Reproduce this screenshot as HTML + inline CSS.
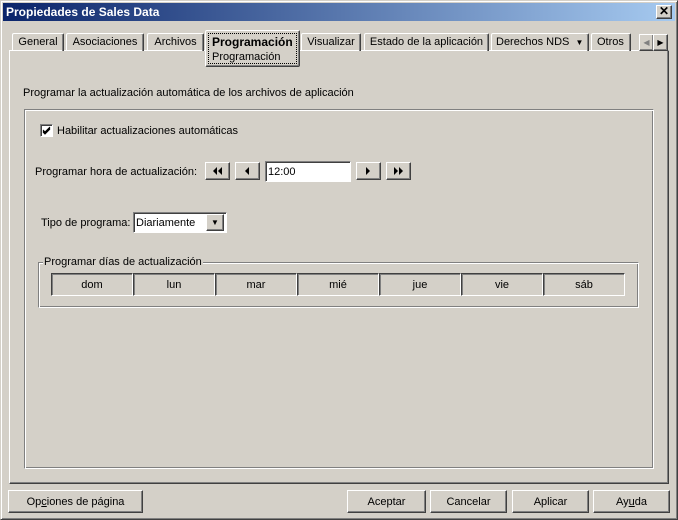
<!DOCTYPE html>
<html><head><meta charset="utf-8"><style>
*{margin:0;padding:0;box-sizing:border-box}
body{width:678px;height:520px;background:#d4d0c8;font-family:"Liberation Sans",sans-serif;font-size:11px;color:#000;position:relative;overflow:hidden}
.a{position:absolute}
.win{left:0;top:0;width:678px;height:520px;border:1px solid;border-color:#d4d0c8 #404040 #404040 #d4d0c8;box-shadow:inset 1px 1px #fff,inset -1px -1px #808080}
.title{left:3px;top:3px;width:672px;height:18px;background:linear-gradient(90deg,#0a246a,#a6caf0);color:#fff;font-weight:bold;font-size:12px;line-height:18px;padding-left:3px}
.xb{left:656px;top:5px;width:16px;height:14px;background:#d4d0c8;border:1px solid;border-color:#fff #404040 #404040 #fff;box-shadow:inset -1px -1px #808080;font-size:12px;line-height:11px;text-align:center;font-weight:bold;color:#000}
.tab{top:33px;height:18px;border:1px solid;border-bottom:none;border-color:#fff #404040 #404040 #fff;border-radius:2px 2px 0 0;box-shadow:inset -1px 0 #808080;line-height:17px;text-align:center;font-size:11px}
.panel{left:9px;top:50px;width:660px;height:434px;border:1px solid;border-color:#fff #404040 #404040 #fff;box-shadow:inset -1px -1px #808080}
.grp{left:24px;top:109px;width:630px;height:360px;border:1px solid;border-color:#808080 #fff #fff #808080;box-shadow:inset 1px 1px #fff,inset -1px -1px #808080}
.btn{border:1px solid;border-color:#fff #404040 #404040 #fff;box-shadow:inset -1px -1px #808080;text-align:center;background:#d4d0c8}
.sunk{border:1px solid;border-color:#808080 #fff #fff #808080;box-shadow:inset 1px 1px #404040;background:#fff}
.day{top:273px;height:23px;width:82px;border:1px solid;border-color:#404040 #fff #fff #404040;box-shadow:inset 1px 1px #808080;text-align:center;line-height:23px}
.ico{display:block;margin:4px auto 0}
</style></head><body>
<div class="a win"></div>
<div class="a title">Propiedades de Sales Data</div>
<div class="a xb">✕</div>

<div class="a panel"></div>
<div class="a tab" style="left:12px;width:52px">General</div>
<div class="a tab" style="left:66px;width:78px">Asociaciones</div>
<div class="a tab" style="left:147px;width:57px">Archivos</div>
<div class="a tab" style="left:301px;width:60px">Visualizar</div>
<div class="a tab" style="left:364px;width:125px">Estado de la aplicación</div>
<div class="a tab" style="left:491px;width:98px;text-align:left;padding-left:4px">Derechos NDS &nbsp;<span style="font-size:8px">▼</span></div>
<div class="a tab" style="left:591px;width:40px;text-align:left;padding-left:5px;overflow:hidden">Otros</div>
<div class="a" style="left:205px;top:30px;width:95px;height:37px;background:#d4d0c8;border:1px solid;border-color:#fff #404040 #404040 #fff;border-radius:2px;box-shadow:inset -1px -1px #808080"></div>
<div class="a" style="left:208px;top:33px;width:89px;height:31px;border:1px dotted #000"></div>
<div class="a" style="left:212px;top:35px;font-weight:bold;font-size:12px">Programación</div>
<div class="a" style="left:212px;top:51px">Programación</div>
<div class="a btn" style="left:639px;top:34px;width:15px;height:17px;font-size:8px;line-height:15px;color:#808080">◀</div>
<div class="a btn" style="left:653px;top:34px;width:15px;height:17px;font-size:8px;line-height:15px">▶</div>

<div class="a" style="left:23px;top:87px">Programar la actualización automática de los archivos de aplicación</div>
<div class="a grp"></div>

<div class="a sunk" style="left:40px;top:124px;width:13px;height:13px"><svg width="11" height="11" style="position:absolute;left:0;top:0"><path d="M2 5 L4 7 L9 2 M2 6 L4 8 L9 3 M2 7 L4 9 L9 4" stroke="#000" fill="none"/></svg></div>
<div class="a" style="left:57px;top:125px">Habilitar actualizaciones automáticas</div>

<div class="a" style="left:35px;top:166px">Programar hora de actualización:</div>
<div class="a btn" style="left:205px;top:162px;width:25px;height:18px"><svg class="ico" width="10" height="8"><path d="M4 0 L0 4 L4 8Z M9 0 L5 4 L9 8Z" fill="#000"/></svg></div>
<div class="a btn" style="left:235px;top:162px;width:25px;height:18px"><svg class="ico" width="5" height="8"><path d="M4 0 L0 4 L4 8Z" fill="#000"/></svg></div>
<div class="a sunk" style="left:265px;top:161px;width:86px;height:21px;line-height:20px;padding-left:2px">12:00</div>
<div class="a btn" style="left:356px;top:162px;width:25px;height:18px"><svg class="ico" width="5" height="8"><path d="M0 0 L4 4 L0 8Z" fill="#000"/></svg></div>
<div class="a btn" style="left:386px;top:162px;width:25px;height:18px"><svg class="ico" width="10" height="8"><path d="M0 0 L4 4 L0 8Z M5 0 L9 4 L5 8Z" fill="#000"/></svg></div>

<div class="a" style="left:41px;top:217px">Tipo de programa:</div>
<div class="a sunk" style="left:133px;top:212px;width:94px;height:21px;line-height:20px;padding-left:2px">Diariamente</div>
<div class="a btn" style="left:206px;top:214px;width:18px;height:17px;font-size:8px;line-height:15px">▼</div>

<div class="a" style="left:38px;top:262px;width:601px;height:46px;border:1px solid;border-color:#808080 #fff #fff #808080;box-shadow:inset 1px 1px #fff,inset -1px -1px #808080"></div>
<div class="a" style="left:43px;top:256px;background:#d4d0c8;padding:0 1px">Programar días de actualización</div>
<div class="a day" style="left:51px">dom</div>
<div class="a day" style="left:133px">lun</div>
<div class="a day" style="left:215px">mar</div>
<div class="a day" style="left:297px">mié</div>
<div class="a day" style="left:379px">jue</div>
<div class="a day" style="left:461px">vie</div>
<div class="a day" style="left:543px">sáb</div>

<div class="a btn" style="left:8px;top:490px;width:135px;height:23px;line-height:22px">Op<u>c</u>iones de página</div>
<div class="a btn" style="left:347px;top:490px;width:79px;height:23px;line-height:22px">Aceptar</div>
<div class="a btn" style="left:430px;top:490px;width:77px;height:23px;line-height:22px">Cancelar</div>
<div class="a btn" style="left:512px;top:490px;width:77px;height:23px;line-height:22px">Aplicar</div>
<div class="a btn" style="left:593px;top:490px;width:77px;height:23px;line-height:22px">Ay<u>u</u>da</div>
</body></html>
